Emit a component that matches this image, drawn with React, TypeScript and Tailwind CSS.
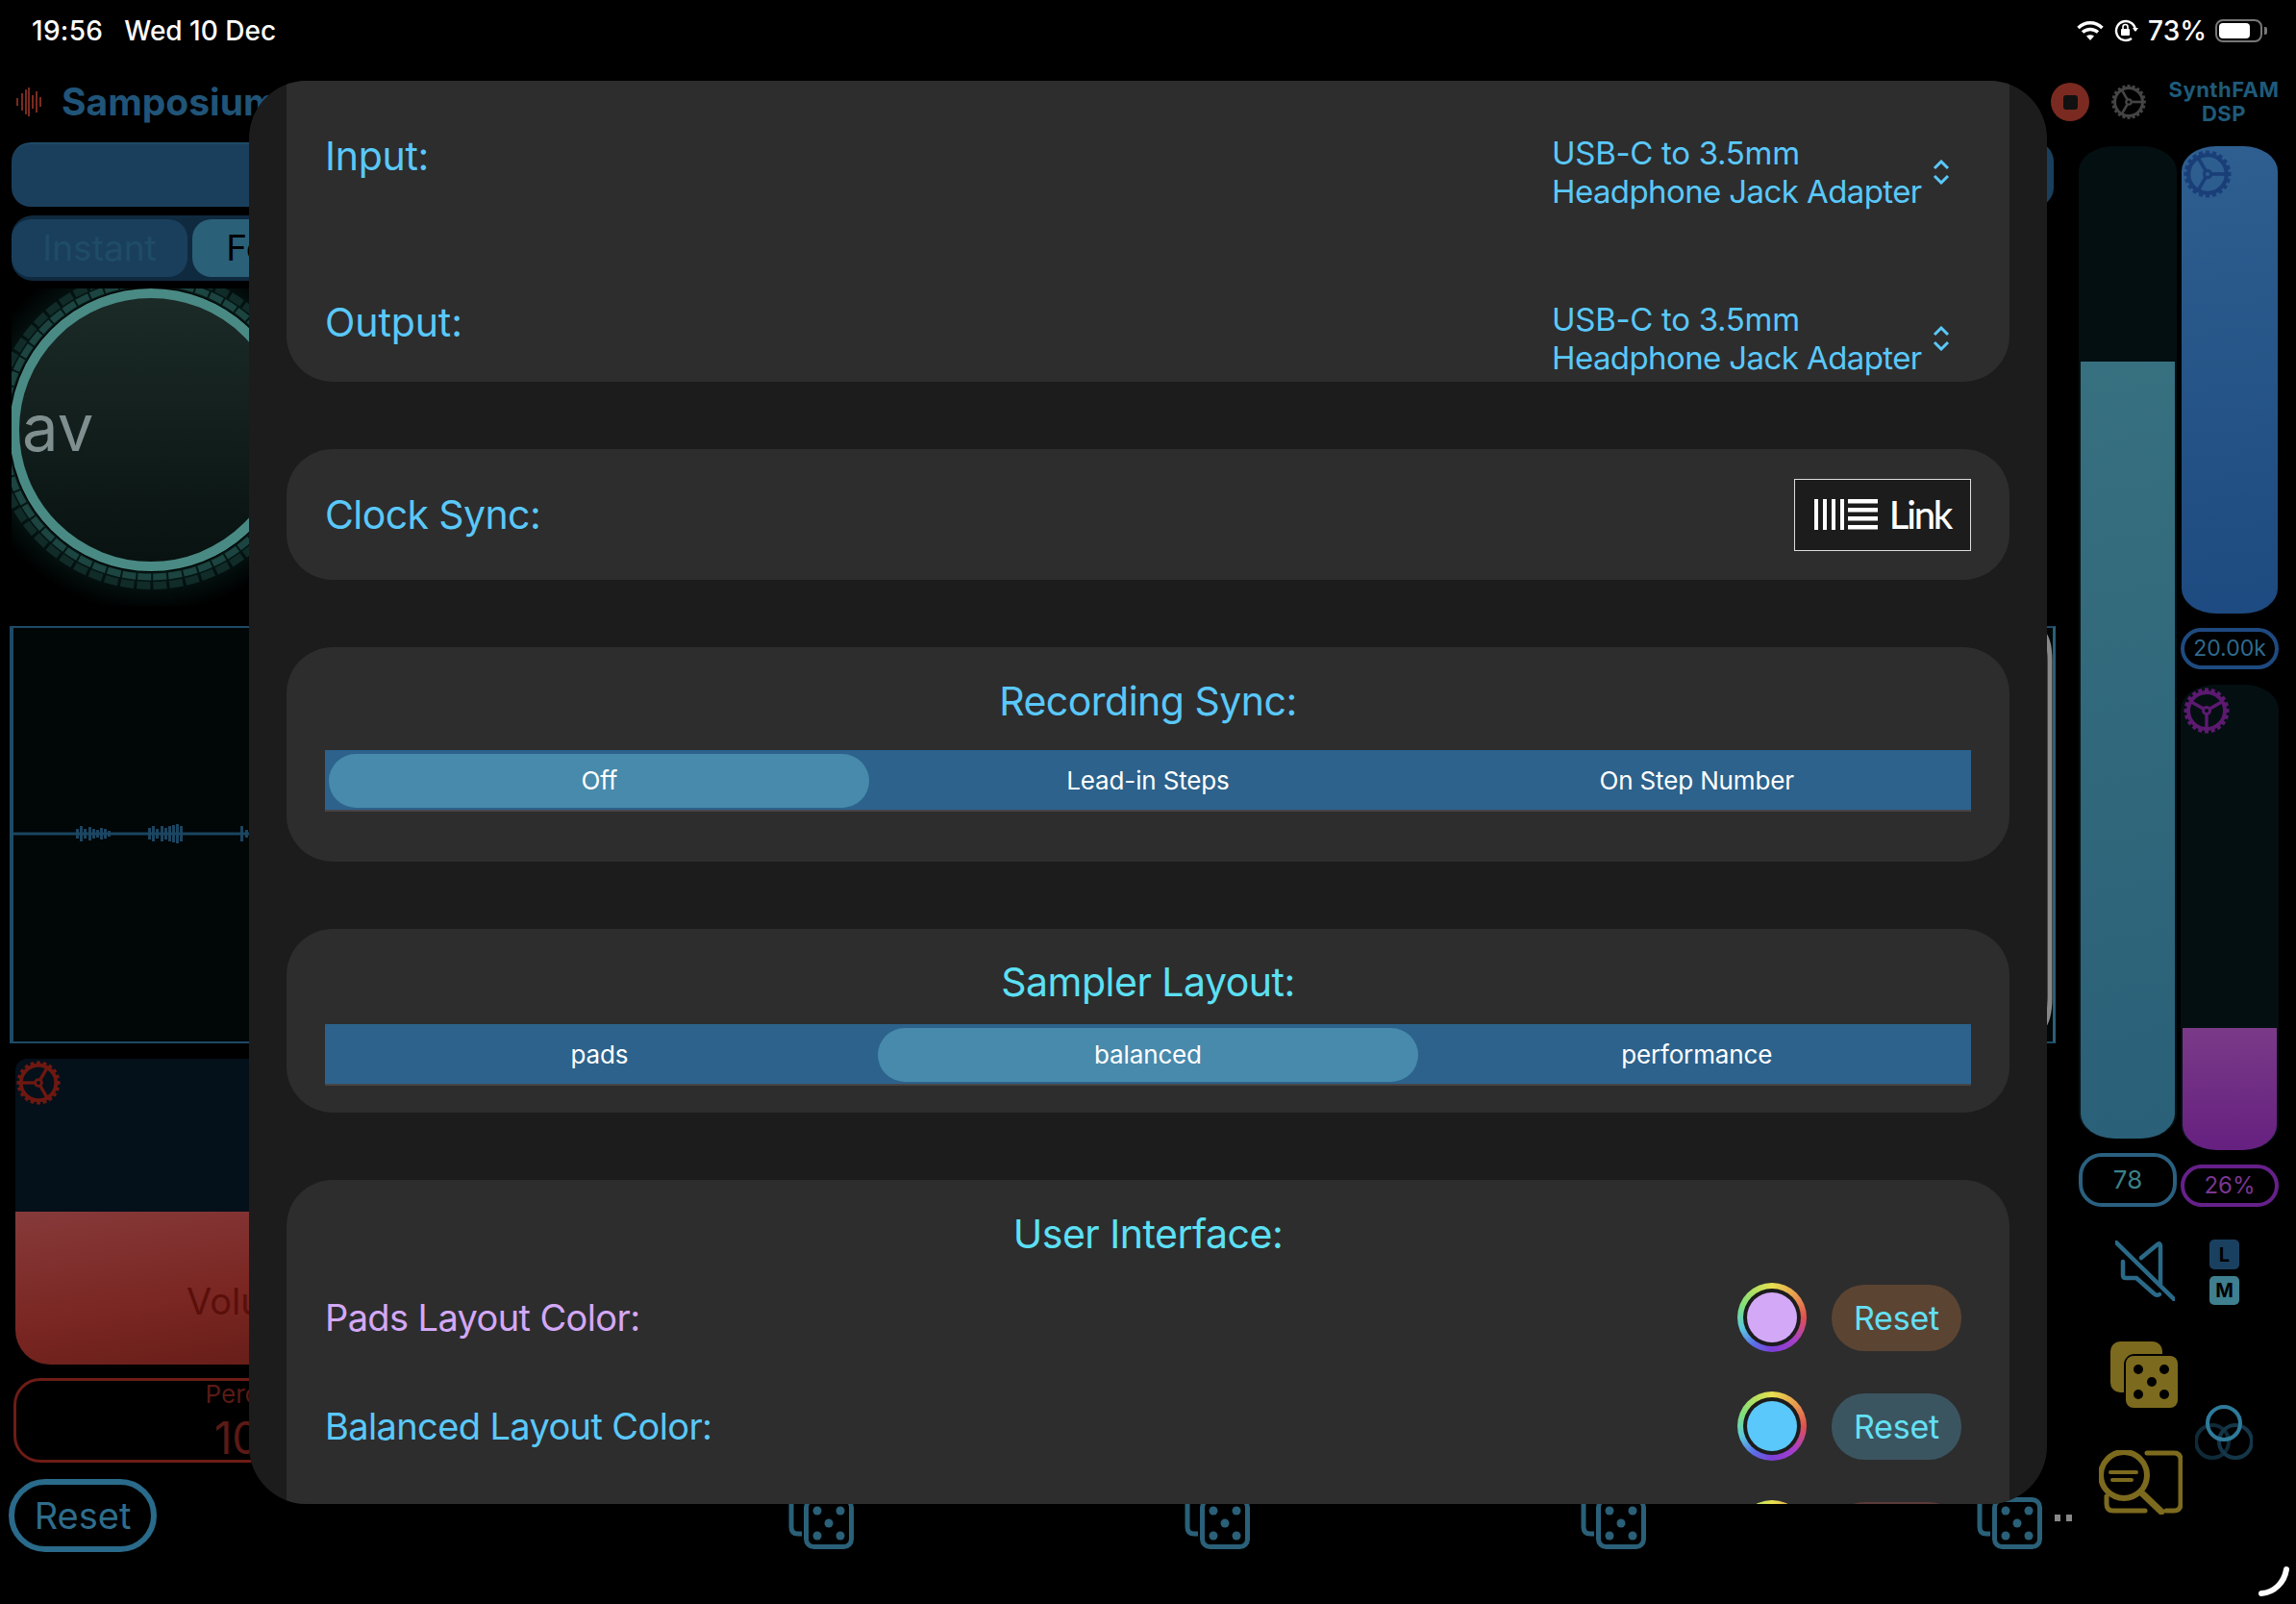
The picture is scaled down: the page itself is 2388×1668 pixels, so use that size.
import React from "react";

const range = (n: number) => Array.from({ length: n }, (_, i) => i);

function Gear({ size, color, rot = 0, className = "" }: { size: number; color: string; rot?: number; className?: string }) {
  return (
    <svg width={size} height={size} viewBox="0 0 100 100" className={className}>
      <g fill="none" stroke={color}>
        <circle cx="50" cy="50" r="38" strokeWidth="8" />
        {range(20).map((i) => (
          <rect key={i} x="46" y="3" width="8" height="10" fill={color} stroke="none" transform={`rotate(${i * 18} 50 50)`} />
        ))}
        <circle cx="50" cy="50" r="7" strokeWidth="6" />
        {[0, 120, 240].map((a) => (
          <line key={a} x1="50" y1="42" x2="50" y2="14" strokeWidth="7" transform={`rotate(${a + rot} 50 50)`} />
        ))}
      </g>
    </svg>
  );
}

function Die() {
  const c = "#2a6078";
  return (
    <svg width="68" height="69" viewBox="0 0 68 69" className="shrink-0">
      <path d="M14 53 H10 Q3 53 3 46 V10 Q3 3 10 3 H42" fill="none" stroke={c} strokeWidth="5" />
      <rect x="18.5" y="17.5" width="47" height="49" rx="8" fill="#000" stroke={c} strokeWidth="5" />
      {[[30, 29], [54, 29], [42, 42], [30, 55], [54, 55]].map(([x, y]) => (
        <circle key={x * y} cx={x} cy={y} r="4.5" fill={c} />
      ))}
    </svg>
  );
}

function Chevrons() {
  return (
    <svg width="18" height="26" viewBox="0 0 18 26" fill="none" stroke="#5ac8fa" strokeWidth="3" className="shrink-0">
      <path d="M2 9 L9 2 L16 9" />
      <path d="M2 17 L9 24 L16 17" />
    </svg>
  );
}

function Device() {
  return (
    <div className="flex items-center gap-[11px] text-[33px] leading-[40px] text-[#5ac8fa] tracking-[-0.3px]">
      <div className="w-[385px] whitespace-nowrap">
        <div>USB-C to 3.5mm</div>
        <div className="tracking-[-0.6px]">Headphone Jack Adapter</div>
      </div>
      <Chevrons />
    </div>
  );
}

function Segmented({ items, active }: { items: string[]; active: number }) {
  return (
    <div className="grid grid-cols-3 bg-[#2c628c] border-b-2 border-[#464648]">
      {items.map((t, i) => (
        <div key={t} className="flex justify-center pt-[4px] pb-[2px]">
          <div
            className={`w-[562px] h-[56px] pb-[1px] rounded-[28px] flex items-center justify-center text-[26px] tracking-[-0.15px] text-white ${
              i === active ? "bg-[#478aac]" : ""
            }`}
          >
            {t}
          </div>
        </div>
      ))}
    </div>
  );
}

function ColorRow({ label, labelColor, fill, resetBg, resetText }: { label?: string; labelColor?: string; fill: string; resetBg: string; resetText?: string }) {
  return (
    <div className="flex items-center justify-between h-[72px]">
      <div className={`text-[38px] tracking-[-0.62px] ${labelColor ?? ""}`}>{label}</div>
      <div className="flex items-center gap-[26px]">
        <div className="w-[72px] h-[72px] rounded-full bg-[conic-gradient(#e8e04f_0deg,#e8964f_50deg,#e0504f_90deg,#a83fc8_135deg,#7d3fd8_180deg,#5a6fe8_215deg,#5ac8e0_250deg,#7de07d_290deg,#b8e05f_330deg,#e8e04f_360deg)] flex items-center justify-center">
          <div className="w-[60px] h-[60px] rounded-full bg-[#1c1c1c] flex items-center justify-center">
            <div className={`w-[52px] h-[52px] rounded-full ${fill}`} />
          </div>
        </div>
        <div className={`w-[135px] h-[69px] rounded-[34px] flex items-center justify-center text-[34px] tracking-[-0.2px] text-[#64e0f5] ${resetBg}`}>{resetText}</div>
      </div>
    </div>
  );
}

function StatusBar() {
  return (
    <div className="h-[64px] flex items-center justify-between pl-[33px] pr-[30px] text-white text-[28px] font-medium">
      <div className="flex gap-[22px]">
        <span className="tracking-[0.3px]">19:56</span>
        <span>Wed 10 Dec</span>
      </div>
      <div className="flex items-center">
        <svg width="28" height="22" viewBox="0 0 28 22" fill="none" stroke="#fff" strokeWidth="3.4">
          <path d="M1.5 8 C8.5 1 19.5 1 26.5 8" />
          <path d="M6 12.6 C10.5 8.4 17.5 8.4 22 12.6" />
          <path d="M14 21 L10 16.6 C12.4 14.8 15.6 14.8 18 16.6 Z" fill="#fff" stroke="none" />
        </svg>
        <svg width="26" height="24" viewBox="0 0 26 24" fill="none" stroke="#fff" strokeWidth="2.4" className="ml-[10px]">
          <path d="M23 12 A10 10 0 1 0 19 20" />
          <path d="M20 9 L23 13 L26 9" fill="#fff" stroke="none" />
          <rect x="8" y="10" width="9" height="7" rx="1" fill="#fff" stroke="none" />
          <path d="M10 10 V8 A2.5 2.5 0 0 1 15 8 V10" strokeWidth="1.6" />
        </svg>
        <span className="ml-[10px]">73%</span>
        <div className="ml-[9px] flex items-center">
          <div className="w-[49px] h-[24px] rounded-[8px] border-2 border-[#777] p-[2px]">
            <div className="w-[32px] h-full rounded-[4px] bg-white" />
          </div>
          <div className="ml-[2px] w-[3px] h-[8px] rounded-r-[2px] bg-[#777]" />
        </div>
      </div>
    </div>
  );
}

function Knob() {
  return (
    <div className="ml-[12px] mt-[8px] h-[351px] w-[330px] overflow-hidden">
      <svg width="330" height="330" viewBox="0 0 330 330">
        <defs>
          <linearGradient id="kn" x1="0" y1="0" x2="0" y2="1">
            <stop offset="0" stopColor="#1c2b28" />
            <stop offset="1" stopColor="#081210" />
          </linearGradient>
          <radialGradient id="gl">
            <stop offset="0.8" stopColor="#051816" />
            <stop offset="1" stopColor="#000" />
          </radialGradient>
        </defs>
        <circle cx="145" cy="147" r="190" fill="url(#gl)" />
        <circle cx="145" cy="147" r="162" fill="none" stroke="#102b28" strokeWidth="8" strokeDasharray="14 3" />
        <circle cx="145" cy="147" r="153" fill="none" stroke="#1c4440" strokeWidth="7" strokeDasharray="14 2" />
        <circle cx="145" cy="147" r="148" fill="#000" />
        <circle cx="145" cy="147" r="142" fill="url(#kn)" stroke="#4a8a84" strokeWidth="10" />
        <text x="11" y="169" fontFamily="Inter" fontSize="67" fill="#7f8f8f">av</text>
      </svg>
    </div>
  );
}

function Waveform() {
  const clusters = [
    [79, 5], [83, 8], [87, 5], [92, 7], [96, 5], [100, 4], [104, 6], [108, 5], [112, 3],
    [154, 6], [158, 8], [162, 5], [167, 8], [171, 6], [175, 8], [179, 9], [183, 10], [187, 8],
    [250, 8], [255, 4],
  ];
  return (
    <div className="ml-[10px] h-[434px] w-[2128px] border-y-2 border-l-4 border-r-[3px] border-[#1e4a66] border-r-[#2a6078] flex bg-[#010607]">
      <svg width="2109" height="430" className="shrink-0">
        <line x1="0" y1="214" x2="2109" y2="214" stroke="#1b4560" strokeWidth="3" />
        {clusters.map(([x, h]) => (
          <rect key={x} x={x - 14} y={214 - h} width="3" height={h * 2} fill="#1b4560" />
        ))}
      </svg>
      <svg width="12" height="430" viewBox="0 0 12 430" fill="none" stroke="#888" strokeWidth="5" className="shrink-0 -mr-[3px]">
        <path d="M0 3 Q9 10 9 34 V385 Q9 408 0 418" />
      </svg>
    </div>
  );
}

function Volume() {
  return (
    <div className="ml-[16px] mt-[16px] h-[318px] w-[490px] flex flex-col bg-[#04101a] rounded-tl-[12px] rounded-b-[36px] relative">
      <Gear size={48} color="#6e1812" rot={-90} className="absolute top-[1px] left-[0px]" />
      <div className="h-[159px]" />
      <div className="flex-1 rounded-b-[36px] bg-[linear-gradient(170deg,#863a3a,#7a2622_50%,#5e1a14)] flex items-center justify-center pt-[28px] text-[38px] text-[#5a0f0a]">
        Volume
      </div>
    </div>
  );
}

function Percent() {
  return (
    <div className="ml-[14px] mt-[14px] h-[88px] w-[494px] rounded-[28px] border-[3px] border-[#6e1c16] flex flex-col items-center">
      <div className="text-[26px] leading-[28px] text-[#5a1a15]">Percent</div>
      <div className="mt-[8px] text-[46px] leading-[46px] text-[#5a1a15]">100</div>
    </div>
  );
}

function BottomRow() {
  return (
    <div className="mt-[17px] pl-[9px] flex items-end h-[76px] pb-[3px]">
      <div className="w-[154px] h-[76px] -mb-[3px] rounded-[38px] border-[6px] border-[#2a6a8a] flex items-center justify-center text-[38px] text-[#2f6d8c] shrink-0">
        Reset
      </div>
      <div className="ml-[657px] flex gap-[344px] shrink-0">
        <Die />
        <Die />
        <Die />
        <Die />
      </div>
      <div className="ml-[13px] mb-[29px] flex gap-[6px] shrink-0">
        <div className="w-[6px] h-[7px] bg-[#888]" />
        <div className="w-[6px] h-[7px] bg-[#888]" />
      </div>
    </div>
  );
}

function MainColumn() {
  return (
    <div className="w-[2140px] shrink-0 flex flex-col">
      <div className="h-[84px] flex items-center pl-[16px]">
        <svg width="28" height="32" viewBox="0 0 28 32" stroke="#7a2a20" strokeWidth="2">
          {[[2, 8], [7, 18], [11, 26], [14, 30], [18, 14], [22, 22], [26, 10]].map(([x, h]) => (
            <line key={x} x1={x} x2={x} y1={16 - h / 2} y2={16 + h / 2} />
          ))}
        </svg>
        <div className="ml-[20px] text-[39px] font-bold text-[#205478] whitespace-nowrap">Samposium</div>
      </div>
      <div className="ml-[12px] h-[67px] w-[2124px] rounded-[20px] bg-[#1a3f5c] border-t-2 border-[#1e4a66]" />
      <div className="ml-[12px] mt-[9px] h-[68px] w-[2116px] rounded-[22px] bg-[#0f2a3f] flex items-center gap-[5px]">
        <div className="w-[183px] h-[60px] rounded-[20px] bg-[#1a3f5c] flex items-center justify-center text-[37px] text-[#1f4c68]">Instant</div>
        <div className="w-[183px] h-[60px] rounded-[20px] bg-[#2a6078] flex items-center justify-center text-[37px] text-black">Follow</div>
      </div>
      <Knob />
      <Waveform />
      <Volume />
      <Percent />
      <BottomRow />
    </div>
  );
}

function Fader({ h, fill, grad, w = "w-[102px]" }: { h: string; fill: string; grad: string; w?: string }) {
  return (
    <div className={`${w} ${h} rounded-t-[36px_26px] rounded-b-[36px_26px] bg-[#040f12] flex flex-col justify-end px-[2px] overflow-hidden`}>
      <div className={`${fill} rounded-b-[36px_26px] ${grad}`} />
    </div>
  );
}

function RightColumn() {
  return (
    <div className="w-[248px] shrink-0 flex flex-col">
      <div className="h-[84px] mb-[4px] flex items-center">
        <div className="-ml-[7px] w-[40px] h-[40px] rounded-full bg-[#7a2a20] flex items-center justify-center shrink-0">
          <div className="w-[15px] h-[15px] rounded-[3px] bg-[#111]" />
        </div>
        <Gear size={38} color="#444" rot={90} className="ml-[22px] shrink-0" />
        <div className="ml-[22px] w-[116px] text-center text-[22px] leading-[25px] font-bold tracking-[0.5px] text-[#1f5a7a]">
          <div className="whitespace-nowrap">SynthFAM</div>
          <div>DSP</div>
        </div>
      </div>
      <div className="flex ml-[22px] gap-[4px]">
        <div className="w-[102px] flex flex-col">
          <Fader h="h-[1032px]" fill="h-[808px]" grad="bg-[linear-gradient(170deg,#37707f,#2a6078)]" />
          <div className="mt-[15px] h-[56px] pb-[2px] rounded-[24px] border-4 border-[#2a6080] flex items-center justify-center text-[26px] text-[#3b8088]">78</div>
          <svg width="62" height="63" viewBox="0 0 62 63" fill="none" stroke="#2a6a88" strokeWidth="4.5" strokeLinecap="round" className="mt-[35px] ml-[38px]">
            <path d="M27 18 L44 4 Q47 2 47 6 V46" />
            <path d="M8 22 V36 Q8 39 11 39 H22 L40 55 Q43 58 46 56" />
            <path d="M1 2 L61 61" />
          </svg>
          <svg width="70" height="69" viewBox="0 0 70 69" className="mt-[42px] ml-[33px]">
            <rect x="0" y="0" width="54" height="53" rx="10" fill="#7c6a1e" />
            <rect x="14" y="13" width="58" height="58" rx="11" fill="#000" />
            <rect x="16" y="15" width="54" height="54" rx="8" fill="#7c6a1e" />
            {[[29, 29], [56, 29], [43, 42], [29, 55], [56, 55]].map(([x, y]) => (
              <circle key={x * y} cx={x} cy={y} r="5" fill="#000" />
            ))}
          </svg>
          <svg width="87" height="67" viewBox="0 0 87 67" fill="none" stroke="#7c6a1e" strokeWidth="5" strokeLinecap="round" className="mt-[44px] ml-[21px]">
            <path d="M50 3 H78 Q85 3 85 10 V56 Q85 63 78 63 H70" />
            <path d="M8 48 V56 Q8 63 15 63 H48" />
            <circle cx="26" cy="26" r="24" strokeWidth="6" />
            <path d="M44 44 L65 64" strokeWidth="7" />
            <path d="M12 23 H39" strokeWidth="4" />
            <path d="M14 31 H34" strokeWidth="4" />
          </svg>
        </div>
        <div className="w-[102px] flex flex-col">
          <div className="relative">
            <div className="w-[100px] ml-[1px] h-[486px] rounded-t-[36px_26px] rounded-b-[36px_26px] bg-[linear-gradient(175deg,#2e5f90,#1d4a80)]" />
            <Gear size={52} color="#1a3f78" rot={90} className="absolute top-[3px] left-[2px]" />
          </div>
          <div className="mt-[15px] h-[43px] rounded-[22px] border-[4px] border-[#1e4a80] flex items-center justify-center text-[23px] text-[#2f6a8c]">20.00k</div>
          <div className="relative mt-[16px]">
            <Fader h="h-[484px]" fill="h-[127px]" grad="bg-[linear-gradient(180deg,#7a3a88,#662080)]" />
            <Gear size={50} color="#5c1a70" rot={180} className="absolute top-[2px] left-[2px]" />
          </div>
          <div className="mt-[15px] h-[44px] rounded-[22px] border-[4px] border-[#66208a] flex items-center justify-center text-[24px] text-[#7a3590]">26%</div>
          <div className="mt-[34px] ml-[30px] w-[31px] h-[31px] rounded-[5px] bg-[#1a4060] flex items-center justify-center text-[20px] font-bold text-black">L</div>
          <div className="mt-[7px] ml-[30px] w-[31px] h-[30px] rounded-[5px] bg-[#3f7f8f] flex items-center justify-center text-[20px] font-bold text-black">M</div>
          <svg width="60" height="57" viewBox="0 0 60 57" fill="none" strokeWidth="4" className="mt-[104px] ml-[15px]">
            <circle cx="18" cy="38" r="17" stroke="#0f2a38" />
            <circle cx="42" cy="38" r="17" stroke="#143648" />
            <circle cx="30" cy="19" r="17" stroke="#2f7a9a" />
          </svg>
        </div>
      </div>
    </div>
  );
}

function SettingsModal() {
  const card = "rounded-[48px] bg-[#2d2d2d]";
  const title = "text-center text-[41px] leading-[48px] tracking-[-0.5px]";
  return (
    <div className="absolute left-[259px] top-[84px] w-[1870px] h-[1480px] rounded-[60px] bg-[#1c1c1c] overflow-hidden px-[39px] flex flex-col gap-[70px]">
      <div className="h-[313px] shrink-0 rounded-b-[48px] bg-[#2d2d2d] pt-[55px] pl-[40px] pr-[62px] flex flex-col gap-[93px]">
        <div className="flex items-start justify-between">
          <div className="-mt-[1px] text-[41px] leading-[48px] tracking-[-0.3px] text-[#5ac8fa]">Input:</div>
          <Device />
        </div>
        <div className="flex items-start justify-between">
          <div className="-mt-[1px] text-[41px] leading-[48px] tracking-[-0.1px] text-[#5ac8fa]">Output:</div>
          <Device />
        </div>
      </div>
      <div className={`${card} h-[136px] shrink-0 flex items-center justify-between pl-[40px] pr-[40px]`}>
        <div className="mt-[2px] text-[41px] text-[#5ac8fa] tracking-[-0.6px]">Clock Sync:</div>
        <div className="w-[184px] h-[75px] bg-[#1c1c1c] border border-[#ddd] flex items-center justify-center gap-[12px]">
          <svg width="66" height="32" viewBox="0 0 66 32" fill="#fff">
            {[0, 9, 18, 27].map((x) => (
              <rect key={x} x={x} y="0" width="4" height="32" />
            ))}
            {[0, 9, 18, 27].map((y) => (
              <rect key={y} x="35" y={y} width="31" height="4.5" />
            ))}
          </svg>
          <span className="font-[family-name:Lato,sans-serif] font-medium text-[40px] leading-none text-white tracking-[-2.2px]">Link</span>
        </div>
      </div>
      <div className={`${card} h-[223px] shrink-0 px-[40px] pt-[32px]`}>
        <div className={`${title} text-[#5ac8fa]`}>Recording Sync:</div>
        <div className="mt-[27px]">
          <Segmented items={["Off", "Lead-in Steps", "On Step Number"]} active={0} />
        </div>
      </div>
      <div className={`${card} h-[191px] shrink-0 px-[40px] pt-[31px]`}>
        <div className={`${title} text-[#5ce0f5]`}>Sampler Layout:</div>
        <div className="mt-[20px]">
          <Segmented items={["pads", "balanced", "performance"]} active={1} />
        </div>
      </div>
      <div className="rounded-t-[48px] bg-[#2d2d2d] shrink-0 h-[420px] pl-[40px] pr-[50px] pt-[32px]">
        <div className={`${title} text-[#5ce0f5] -mr-[10px]`}>User Interface:</div>
        <div className="mt-[27px] flex flex-col gap-[41px]">
          <ColorRow label="Pads Layout Color:" labelColor="text-[#d3a8f7]" fill="bg-[#d3a8f7]" resetBg="bg-[#5c4433]" resetText="Reset" />
          <ColorRow label="Balanced Layout Color:" labelColor="text-[#5ac8fa]" fill="bg-[#5ac8fa]" resetBg="bg-[#3b5560]" resetText="Reset" />
          <ColorRow fill="bg-[#e8e04f]" resetBg="bg-[#5c3a3a]" />
        </div>
      </div>
    </div>
  );
}

export default function App() {
  return (
    <div className="relative w-[2388px] h-[1668px] overflow-hidden bg-black flex flex-col font-[family-name:Inter,sans-serif]">
      <StatusBar />
      <div className="flex flex-1">
        <MainColumn />
        <RightColumn />
      </div>
      <SettingsModal />
      <svg width="32" height="32" viewBox="0 0 32 32" fill="none" stroke="#fff" strokeWidth="6" strokeLinecap="round" className="absolute left-[2349px] top-[1629px]">
        <path d="M29 3 C27 16 17 27 3 28" />
      </svg>
    </div>
  );
}
